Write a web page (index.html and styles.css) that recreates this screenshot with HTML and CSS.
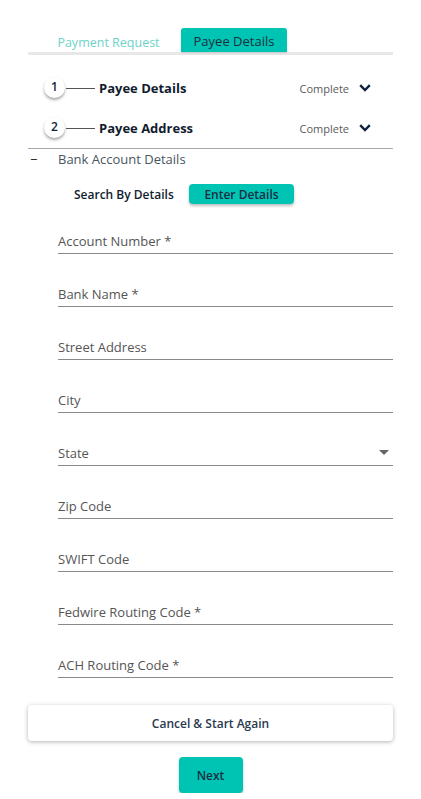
FILE: index.html
```html
<!DOCTYPE html>
<html>
<head>
<meta charset="utf-8">
<link rel="stylesheet" href="styles.css">
</head>
<body>
<div class="page">
  <div class="tabs">
    <div class="tab">Payment Request</div>
    <div class="tab active">Payee Details</div>
  </div>

  <div class="steps">
    <div class="step">
      <div class="num">1</div>
      <div class="connector"></div>
      <div class="step-title">Payee Details</div>
      <div class="status">Complete</div>
      <svg class="chev" width="12" height="8" viewBox="0 0 12 8"><polyline points="1.2,1.2 6,6 10.8,1.2" fill="none" stroke="#0f2340" stroke-width="2.4"/></svg>
    </div>
    <div class="step">
      <div class="num">2</div>
      <div class="connector"></div>
      <div class="step-title">Payee Address</div>
      <div class="status">Complete</div>
      <svg class="chev" width="12" height="8" viewBox="0 0 12 8"><polyline points="1.2,1.2 6,6 10.8,1.2" fill="none" stroke="#0f2340" stroke-width="2.4"/></svg>
    </div>
  </div>

  <div class="section-head">
    <span class="minus">−</span>
    <span class="section-title">Bank Account Details</span>
  </div>

  <div class="toggle">
    <span class="toggle-off">Search By Details</span>
    <span class="toggle-on">Enter Details</span>
  </div>

  <div class="fields">
    <div class="field"><span class="label">Account Number *</span></div>
    <div class="field"><span class="label">Bank Name *</span></div>
    <div class="field"><span class="label">Street Address</span></div>
    <div class="field"><span class="label">City</span></div>
    <div class="field select"><span class="label">State</span><span class="caret"></span></div>
    <div class="field"><span class="label">Zip Code</span></div>
    <div class="field"><span class="label">SWIFT Code</span></div>
    <div class="field"><span class="label">Fedwire Routing Code *</span></div>
    <div class="field"><span class="label">ACH Routing Code *</span></div>
  </div>

  <div class="cancel">Cancel &amp; Start Again</div>
  <div class="actions"><div class="next">Next</div></div>
</div>
</body>
</html>
```

FILE: styles.css
```css
* { box-sizing: border-box; }
html, body { margin: 0; padding: 0; background: #fff; }
body { font-family: "Open Sans", "Liberation Sans", sans-serif; color: #1b2a3e; }

.page { width: 421px; padding: 28px 28px 0 28px; }

.tabs {
  display: flex;
  height: 27px;
  border-bottom: 3px solid #e8e8e8;
}
.tab {
  height: 24px;
  display: flex;
  align-items: center;
  justify-content: center;
  font-size: 13px;
}
.tab:first-child { width: 153px; color: #6dd2c8; padding-top: 4px; padding-left: 8px; font-size: 12.5px; }
.tab.active {
  width: 106px;
  background: #00c4b3;
  color: #1d3040;
  border-radius: 3px 3px 0 0;
  box-shadow: 0 1px 2px rgba(0,0,0,0.15);
  padding-top: 2px;
}

.steps { margin-top: 13px; border-bottom: 1px solid #a8a8a8; }
.step {
  height: 40px;
  display: flex;
  align-items: center;
  padding-left: 16px;
  padding-right: 22px;
}
.num {
  width: 21px;
  height: 21px;
  border-radius: 50%;
  background: #fff;
  box-shadow: 0 2px 3px rgba(0,0,0,0.35);
  display: flex;
  align-items: center;
  justify-content: center;
  font-size: 12px;
  font-weight: 600;
  color: #14213a;
  margin-top: -2px;
  padding-bottom: 2px;
}
.connector { width: 29px; height: 1px; background: #555; margin-left: 1px; margin-right: 4px; }
.step-title { font-size: 13px; font-weight: 700; color: #111c2e; flex: 1; }
.status { font-size: 11px; color: #5a5a5a; margin-right: 10px; }
.chev { display: block; }

.section-head {
  height: 20px;
  display: flex;
  align-items: center;
  font-size: 13px;
}
.minus { width: 30px; color: #222; padding-left: 2px; font-size: 13px; }
.section-title { color: #4a5560; }

.toggle {
  margin-top: 15px;
  height: 20px;
  display: flex;
  align-items: center;
  padding-left: 46px;
  margin-bottom: -3px;
}
.toggle-off { font-size: 12px; font-weight: 600; color: #111c2e; width: 115px; }
.toggle-on {
  width: 105px;
  height: 20px;
  background: #00c4b3;
  border-radius: 4px;
  box-shadow: 0 2px 3px rgba(0,0,0,0.25);
  display: flex;
  align-items: center;
  justify-content: center;
  font-size: 12px;
  font-weight: 600;
  color: #1d2d44;
}

.fields { padding-left: 30px; }
.field {
  height: 53px;
  border-bottom: 1px solid #8a8a8a;
  display: flex;
  align-items: flex-end;
  justify-content: space-between;
  padding-bottom: 4px;
}
.label { font-size: 13px; line-height: 16px; color: #555; }
.caret {
  width: 0; height: 0;
  border-left: 5px solid transparent;
  border-right: 5px solid transparent;
  border-top: 5px solid #666;
  margin-right: 4px;
  margin-bottom: 6px;
}

.cancel {
  margin-top: 27px;
  height: 36px;
  border-radius: 4px;
  background: #fff;
  box-shadow: 0 1px 4px rgba(0,0,0,0.3);
  display: flex;
  align-items: center;
  justify-content: center;
  font-size: 12px;
  font-weight: 600;
  color: #2a3a4e;
}
.actions { display: flex; justify-content: center; margin-top: 16px; }
.next {
  width: 64px;
  height: 36px;
  background: #00c4b3;
  border-radius: 4px;
  box-shadow: 0 2px 3px rgba(0,0,0,0.25);
  display: flex;
  align-items: center;
  justify-content: center;
  font-size: 12px;
  font-weight: 600;
  color: #1d2d44;
}
```
